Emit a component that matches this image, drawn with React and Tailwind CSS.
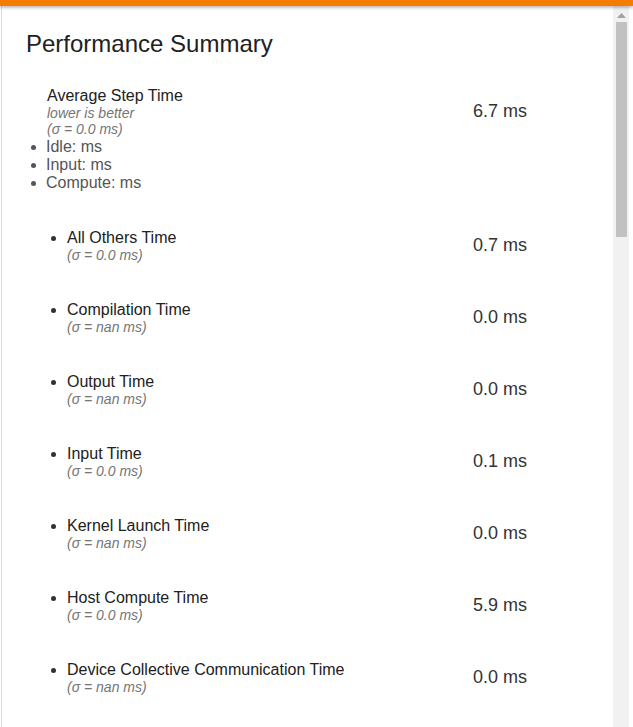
import React from 'react';

const rows = [
  { name: 'All Others Time', sigma: '0.0', value: '0.7' },
  { name: 'Compilation Time', sigma: 'nan', value: '0.0' },
  { name: 'Output Time', sigma: 'nan', value: '0.0' },
  { name: 'Input Time', sigma: '0.0', value: '0.1' },
  { name: 'Kernel Launch Time', sigma: 'nan', value: '0.0' },
  { name: 'Host Compute Time', sigma: '0.0', value: '5.9' },
  { name: 'Device Collective Communication Time', sigma: 'nan', value: '0.0' },
];

const Dot = ({ className = '' }) => (
  <span className={`block w-[5px] h-[5px] rounded-full bg-[#333] ${className}`} />
);

const Scrollbar = () => (
  <div className="w-[16px] shrink-0 bg-[#f1f1f1] flex flex-col items-center pt-[7px]">
    <svg width="9" height="5" viewBox="0 0 9 5">
      <polygon points="4.5,0 9,5 0,5" fill="#a3a3a3" />
    </svg>
    <div className="mt-[4px] w-[11px] h-[215px] bg-[#c1c1c1]" />
  </div>
);

export default function App() {
  return (
    <div
      className="w-[633px] h-[727px] overflow-hidden bg-white flex flex-col"
      style={{ fontFamily: '"Liberation Sans", Arial, sans-serif' }}
    >
      <div className="h-[6px] shrink-0 bg-[#f57c00] relative z-10 shadow-[0_2px_3px_rgba(0,0,0,0.25)]" />
      <div className="flex flex-1 min-h-0">
        <div className="flex-1 min-w-0 ml-[1px] border-l border-[#dcdcdc] overflow-hidden">
          <h1 className="mt-[24px] ml-[24px] text-[24px] leading-[28px] text-[#212121] font-normal">
            Performance Summary
          </h1>

          {/* Average step time block */}
          <div className="mt-[29px] flex">
            <div className="w-[471px] shrink-0">
              <div className="pl-[45px]">
                <div className="text-[16px] leading-[18px] text-[#212121]">Average Step Time</div>
                <div className="text-[14px] leading-[16px] italic text-[#757575]">lower is better</div>
                <div className="text-[14px] leading-[16px] italic text-[#757575]">(σ = 0.0 ms)</div>
              </div>
              <ul className="mt-[1px] text-[16px] leading-[18px] text-[#555]">
                {['Idle: ms', 'Input: ms', 'Compute: ms'].map((t) => (
                  <li key={t} className="flex items-center">
                    <Dot className="ml-[29px] mr-[10px] bg-[#555]" />
                    {t}
                  </li>
                ))}
              </ul>
            </div>
            <div className="pt-[14px] text-[18px] leading-[21px] text-[#333]">6.7 ms</div>
          </div>

          {/* breakdown rows */}
          <div className="mt-[18px]">
            {rows.map((r) => (
              <div key={r.name} className="h-[72px] flex items-center">
                <div className="w-[471px] shrink-0 flex">
                  <Dot className="ml-[49px] mr-[11px] mt-[7px]" />
                  <div>
                    <div className="text-[16px] leading-[18px] text-[#212121]">{r.name}</div>
                    <div className="text-[14px] leading-[16px] italic text-[#757575]">(σ = {r.sigma} ms)</div>
                  </div>
                </div>
                <div className="mb-[2px] text-[18px] leading-[21px] text-[#333]">{r.value} ms</div>
              </div>
            ))}
          </div>
        </div>
        <Scrollbar />
        <div className="w-[4px] shrink-0 bg-white" />
      </div>
    </div>
  );
}
